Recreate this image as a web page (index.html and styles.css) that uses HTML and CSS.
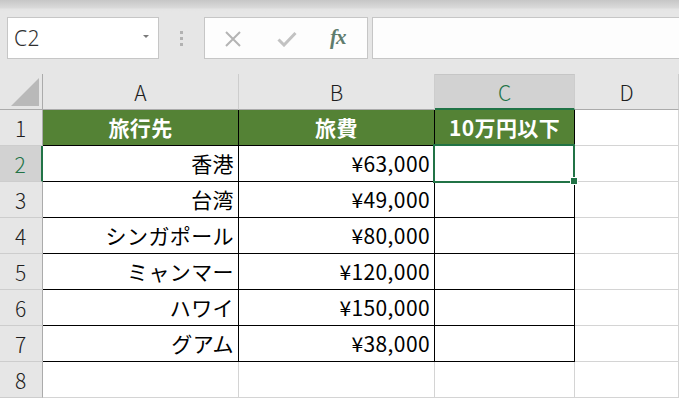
FILE: index.html
```html
<!DOCTYPE html>
<html lang="ja">
<head>
<meta charset="utf-8">
<link rel="stylesheet" href="styles.css">
</head>
<body>
<div class="toolbar">
  <div class="namebox">
    <span class="name">C2</span>
    <span class="arrow"></span>
  </div>
  <div class="grip"><i></i><i></i><i></i></div>
  <div class="buttons">
    <svg class="ico" width="18" height="18" viewBox="0 0 18 18"><path d="M2 2 L16 16 M16 2 L2 16" stroke="#b4b4b4" stroke-width="2" fill="none"/></svg>
    <svg class="ico" width="20" height="16" viewBox="0 0 20 16"><path d="M1.5 8.5 L7 14 L18.5 2" stroke="#c2c2c2" stroke-width="3" fill="none"/></svg>
    <span class="fx">fx</span>
  </div>
  <div class="formula"></div>
</div>
<div class="sheet">
  <div class="corner"><span class="tri"></span></div>
  <div class="colhead">A</div>
  <div class="colhead">B</div>
  <div class="colhead active">C</div>
  <div class="colhead">D</div>

  <div class="rowhead">1</div>
  <div class="cell t th">旅行先</div>
  <div class="cell t th">旅費</div>
  <div class="cell t th">10万円以下</div>
  <div class="cell"></div>

  <div class="rowhead active">2</div>
  <div class="cell t">香港</div>
  <div class="cell t">¥63,000</div>
  <div class="cell t sel"><span class="selbox"></span><span class="handle"></span></div>
  <div class="cell"></div>

  <div class="rowhead">3</div>
  <div class="cell t">台湾</div>
  <div class="cell t">¥49,000</div>
  <div class="cell t"></div>
  <div class="cell"></div>

  <div class="rowhead">4</div>
  <div class="cell t">シンガポール</div>
  <div class="cell t">¥80,000</div>
  <div class="cell t"></div>
  <div class="cell"></div>

  <div class="rowhead">5</div>
  <div class="cell t">ミャンマー</div>
  <div class="cell t">¥120,000</div>
  <div class="cell t"></div>
  <div class="cell"></div>

  <div class="rowhead">6</div>
  <div class="cell t">ハワイ</div>
  <div class="cell t">¥150,000</div>
  <div class="cell t"></div>
  <div class="cell"></div>

  <div class="rowhead">7</div>
  <div class="cell t">グアム</div>
  <div class="cell t">¥38,000</div>
  <div class="cell t"></div>
  <div class="cell"></div>

  <div class="rowhead">8</div>
  <div class="cell"></div>
  <div class="cell"></div>
  <div class="cell"></div>
  <div class="cell"></div>
</div>
</body>
</html>
```

FILE: styles.css
```css
* { box-sizing: border-box; }
html, body { margin: 0; padding: 0; }
body {
  width: 679px;
  height: 398px;
  overflow: hidden;
  background: #e6e6e6;
  font-family: "Noto Sans CJK JP", "Noto Sans", sans-serif;
}
.toolbar {
  height: 74px;
  display: flex;
  align-items: flex-start;
  padding: 17px 0 0 7px;
  background: linear-gradient(to bottom, #c6c6c6 0px, #dadada 8px, #e4e4e4 9px, #e6e6e6 12px);
}
.namebox {
  width: 152px;
  height: 42px;
  background: #fff;
  border: 1px solid #c6c6c6;
  display: flex;
  align-items: center;
  justify-content: space-between;
  padding: 0 9px 0 6px;
}
.name {
  font-family: "Noto Sans", "Liberation Sans", sans-serif;
  font-size: 21px;
  font-weight: 300;
  color: #303030;
  letter-spacing: 0.5px;
}
.arrow {
  width: 0;
  height: 0;
  border-left: 3px solid transparent;
  border-right: 3px solid transparent;
  border-top: 3px solid #7a7a7a;
  margin-top: -4px;
}
.grip {
  width: 45px;
  height: 42px;
  display: flex;
  flex-direction: column;
  align-items: center;
  justify-content: center;
  gap: 3px;
}
.grip i {
  display: block;
  width: 3px;
  height: 3px;
  background: #b2b2b2;
}
.buttons {
  width: 164px;
  height: 42px;
  background: #fdfdfd;
  border: 1px solid #c6c6c6;
  display: flex;
  align-items: center;
  padding-left: 19px;
}
.buttons .ico:first-child { margin-right: 35px; margin-top: 1px; }
.buttons .ico:nth-child(2) { margin-right: 33px; margin-top: 2px; }
.fx {
  font-family: "Liberation Serif", "DejaVu Serif", serif;
  font-style: italic;
  font-weight: bold;
  font-size: 21px;
  color: #5f7c6e;
  letter-spacing: -1px;
  margin-top: -2px;
}
.formula {
  flex: 1;
  height: 42px;
  margin-left: 4px;
  margin-right: -3px;
  background: #fdfdfd;
  border: 1px solid #c6c6c6;
}
.sheet {
  display: grid;
  grid-template-columns: 43px 196px 196px 140px 104px;
  grid-template-rows: repeat(9, 36px);
}
.corner {
  background: #e6e6e6;
  border-right: 1px solid #ababab;
  border-bottom: 1px solid #ababab;
  position: relative;
}
.tri {
  position: absolute;
  left: 11px;
  top: 4px;
  width: 28px;
  height: 28px;
  background: #b9b9b9;
  clip-path: polygon(100% 0, 100% 100%, 0 100%);
}
.colhead {
  background: #e6e6e6;
  border-right: 1px solid #cdcdcd;
  border-bottom: 1px solid #ababab;
  display: flex;
  align-items: center;
  justify-content: center;
  font-size: 21px;
  font-weight: 300;
  color: #1e1e1e;
  padding-top: 1px;
}
.colhead.active {
  background: #d2d2d2;
  color: #217346;
  border-bottom: 2px solid #217346;
  border-top: 1px solid #c6c6c6;
}
.rowhead {
  background: #e6e6e6;
  border-right: 1px solid #ababab;
  border-bottom: 1px solid #cdcdcd;
  display: flex;
  align-items: center;
  justify-content: center;
  font-size: 21px;
  font-weight: 300;
  color: #1e1e1e;
  padding-right: 1px;
}
.rowhead.active {
  background: #d2d2d2;
  color: #217346;
  border-right: 2px solid #217346;
}
.cell {
  background: #fff;
  border-right: 1px solid #d4d4d4;
  border-bottom: 1px solid #d4d4d4;
  display: flex;
  align-items: center;
  justify-content: flex-end;
  padding: 0 4px 1px 0;
  font-size: 21px;
  letter-spacing: 0.4px;
  color: #000;
  white-space: nowrap;
}
.cell.t {
  border-right-color: #000;
  border-bottom-color: #000;
}
.cell.th {
  background: #548235;
  color: #fff;
  font-weight: bold;
  justify-content: center;
  padding: 0 0 1px 0;
}
.cell.sel { position: relative; }
.selbox {
  position: absolute;
  left: -2px;
  top: -2px;
  width: 142px;
  height: 39px;
  border: 2px solid #217346;
}
.handle {
  position: absolute;
  left: 135px;
  top: 31px;
  width: 8px;
  height: 8px;
  background: #217346;
  border: 1px solid #fff;
}
```
